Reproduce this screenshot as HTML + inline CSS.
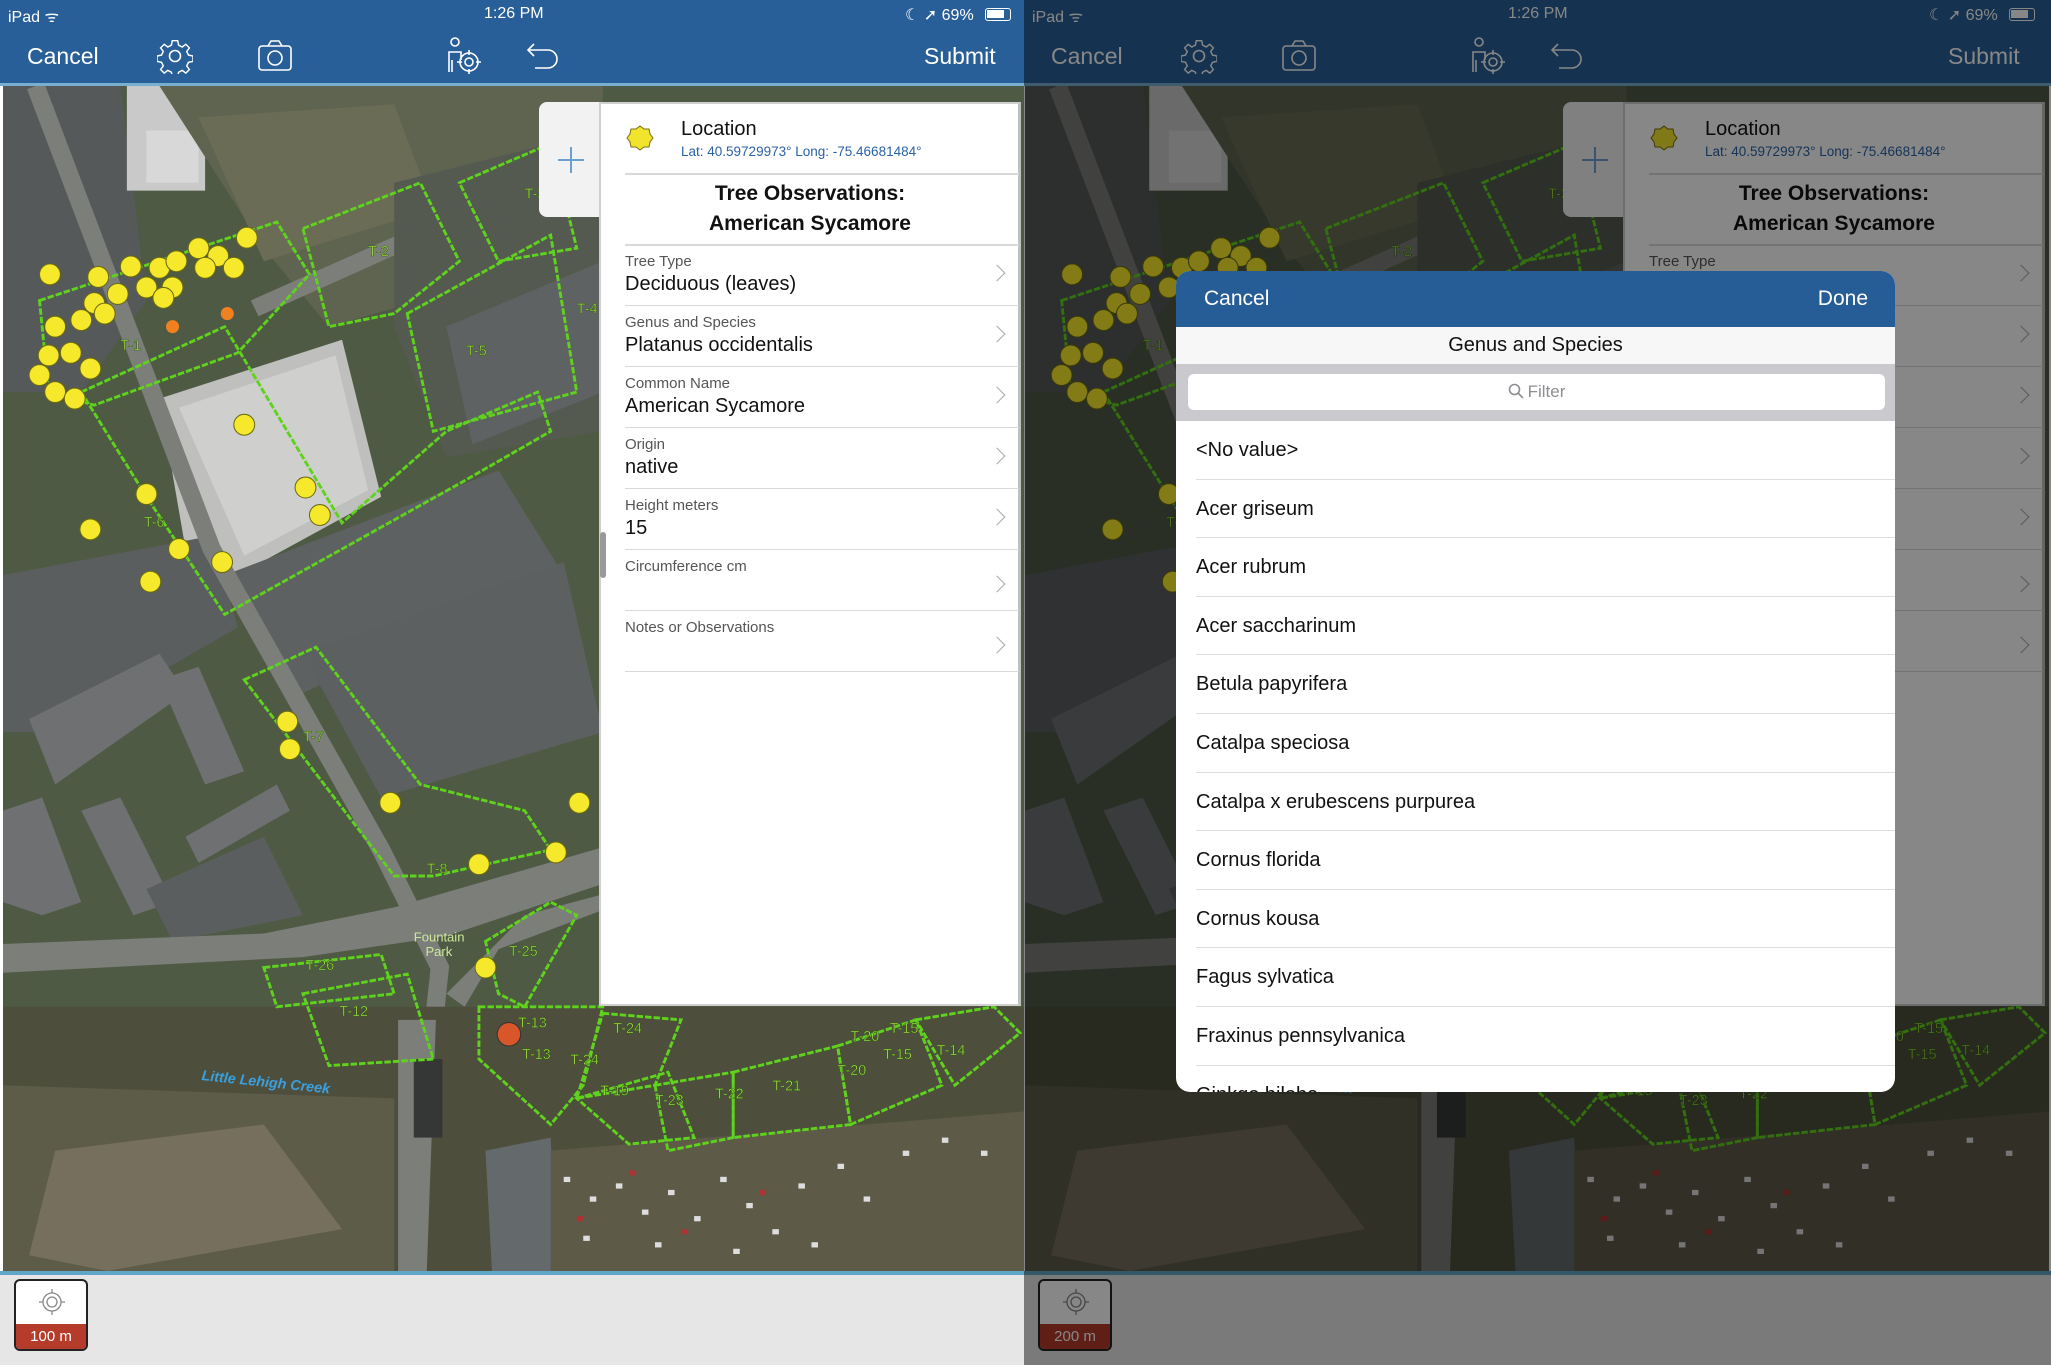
<!DOCTYPE html>
<html><head><meta charset="utf-8">
<style>
*{margin:0;padding:0;box-sizing:border-box}
body{width:2051px;height:1370px;background:#fff;position:relative;overflow:hidden;font-family:"Liberation Sans",Arial,sans-serif}
.panel{position:absolute;top:0;width:1024px;height:1370px;overflow:hidden}
.abs{position:absolute}
.top{position:absolute;left:0;top:0;width:1024px;height:86px;background:#295f98;border-bottom:3px solid #78aed0}
.st{color:#fff;font-size:16px;position:absolute;top:5px}
.nav{color:#fff;font-size:23px;position:absolute;top:43px}
.form{position:absolute;left:599px;top:102px;width:422px;height:904px;background:#fff;border:2px solid #cfcfcf;border-right:3px solid #bfbfbf}
.plus{position:absolute;left:539px;top:102px;width:62px;height:115px;background:#f2f2f2;border-radius:8px 0 0 8px}
.row{position:absolute;left:24px;width:394px;height:61px;border-bottom:1.5px solid #d9d9d9}
.lab{position:absolute;left:0;top:8px;font-size:15px;color:#555}
.val{position:absolute;left:0;top:28px;font-size:20px;color:#111}
.chev{position:absolute;right:16px;top:22px;width:12px;height:12px;border-right:1.8px solid #aaa;border-top:1.8px solid #aaa;transform:rotate(45deg)}
.bot{position:absolute;left:0;top:1271px;width:1024px;height:94px;background:#e6e6e6;border-top:4px solid #5fa6c8}
.btn{position:absolute;left:14px;top:1279px;width:74px;height:72px;border:2px solid #222;border-radius:6px;background:#fff;overflow:hidden}
.btn .r{position:absolute;left:0;bottom:0;width:100%;height:25px;background:#b53b2a;color:#fff;font-size:15px;text-align:center;line-height:25px}
.dim{position:absolute;left:0;top:0;width:1027px;height:1365px;background:rgba(0,0,0,0.47)}
.modal{position:absolute;left:1176px;top:271px;width:719px;height:821px;background:#fff;border-radius:14px;overflow:hidden}
.mh{position:absolute;left:0;top:0;width:100%;height:56px;background:#275d97;color:#fff;font-size:21px}
.it{position:absolute;left:20px;right:0;height:58.6px;border-bottom:1.5px solid #ddd;font-size:20px;color:#111;line-height:58px}
</style></head><body>
<svg width="0" height="0" style="position:absolute">
<defs>
<g id="map">
<rect x="0" y="66" width="783" height="906" fill="#4f5a44"/>
<polygon points="0,66 90,66 110,230 60,300 0,300" fill="#55595a"/>
<rect x="95" y="66" width="60" height="80" fill="#c9c9c9"/>
<rect x="110" y="100" width="40" height="40" fill="#d8d8d8"/>
<polygon points="120,66 460,66 460,190 250,250 200,190" fill="#5f6450"/>
<polygon points="150,90 300,80 330,160 200,200" fill="#6b6c56"/>
<polygon points="190,230 460,110 460,124 196,242" fill="#7c7e7a"/>
<polygon points="300,140 460,100 460,330 340,350 300,250" fill="#545a50"/>
<polygon points="340,250 460,200 460,300 360,340" fill="#5f6262"/>
<polygon points="120,305 260,260 290,380 180,440 140,420" fill="#bfc0be"/>
<polygon points="135,312 255,272 280,375 185,425" fill="#cfd0ce"/>
<polygon points="170,440 380,360 430,440 230,530" fill="#5e6161"/>
<polygon points="230,500 430,430 460,560 290,610" fill="#5d6060"/>
<polygon points="0,440 160,410 180,480 40,560 0,560" fill="#5b5e5f"/>
<polygon points="20,550 120,500 140,530 40,600" fill="#6e7072"/>
<polygon points="60,620 90,610 130,690 100,700" fill="#6e7072"/>
<polygon points="120,520 150,510 185,590 155,600" fill="#6e7072"/>
<polygon points="0,620 30,610 60,690 30,700 0,690" fill="#6e7072"/>
<polygon points="140,640 210,600 220,620 150,660" fill="#6e7072"/>
<polygon points="110,680 200,640 230,700 130,720" fill="#5b5e5f"/>
<polyline points="25,66 160,420 290,650 335,740 322,860 310,972" fill="none" stroke="#7c7e7a" stroke-width="14"/>
<polygon points="0,722 200,714 300,694 460,648 460,676 340,716 230,732 0,744" fill="#7c7e7a"/>
<polygon points="340,760 400,700 460,684 460,696 380,726 354,770" fill="#7c7e7a"/>
<polygon points="0,770 783,770 783,972 0,972" fill="#4d4f3c"/>
<polygon points="0,830 300,840 300,972 0,972" fill="#5c5c48"/>
<polygon points="40,880 200,860 260,940 80,972 20,960" fill="#766f5e"/>
<polygon points="303,780 332,780 325,972 303,972" fill="#7c7e7a"/>
<rect x="315" y="810" width="22" height="60" fill="#353737"/>
<polygon points="370,880 420,870 425,972 375,972" fill="#646a6b"/>
<polygon points="420,880 783,850 783,972 420,972" fill="#5e5a48"/>
<g fill="#ddd">
<rect x="430" y="900" width="5" height="4"/><rect x="450" y="915" width="5" height="4"/><rect x="470" y="905" width="5" height="4"/><rect x="490" y="925" width="5" height="4"/><rect x="510" y="910" width="5" height="4"/><rect x="530" y="930" width="5" height="4"/><rect x="550" y="900" width="5" height="4"/><rect x="570" y="920" width="5" height="4"/><rect x="590" y="940" width="5" height="4"/><rect x="610" y="905" width="5" height="4"/><rect x="640" y="890" width="5" height="4"/><rect x="660" y="915" width="5" height="4"/><rect x="690" y="880" width="5" height="4"/><rect x="720" y="870" width="5" height="4"/><rect x="750" y="880" width="5" height="4"/><rect x="445" y="945" width="5" height="4"/><rect x="500" y="950" width="5" height="4"/><rect x="560" y="955" width="5" height="4"/><rect x="620" y="950" width="5" height="4"/>
</g>
<g fill="#a33">
<rect x="440" y="930" width="5" height="4"/><rect x="520" y="940" width="5" height="4"/><rect x="580" y="910" width="5" height="4"/><rect x="480" y="895" width="5" height="4"/>
</g>
<g fill="none" stroke="#5fd21e" stroke-width="2.2" stroke-dasharray="5 1.5">
<polygon points="28,230 210,170 235,210 180,270 70,310 35,300"/>
<polygon points="230,175 320,140 350,200 300,240 250,250"/>
<polygon points="310,240 420,180 440,300 330,330"/>
<polygon points="350,140 420,110 440,190 380,200"/>
<polygon points="60,300 170,250 260,400 340,330 410,300 420,330 350,370 170,470 110,380"/>
<polygon points="185,520 240,495 320,600 400,620 420,650 330,670 300,670"/>
<polygon points="200,740 290,730 300,760 210,770"/>
<polygon points="230,760 310,745 330,810 250,815"/>
<polygon points="370,720 420,690 440,700 400,770 380,760"/>
<polygon points="365,770 460,770 445,830 420,860 365,810"/>
<polygon points="460,775 520,780 500,830 440,840"/>
<polygon points="440,840 510,820 530,870 480,875"/>
<polygon points="500,830 560,820 560,870 510,880"/>
<polygon points="560,820 640,800 650,860 560,870"/>
<polygon points="640,800 700,780 720,830 650,860"/>
<polygon points="700,780 760,770 780,790 730,830"/>
</g>
<g font-family="Liberation Sans,sans-serif" font-size="11" fill="#b7f04a" stroke="#2a5a10" stroke-width="0.4">
<text x="90" y="268">T-1</text><text x="280" y="196">T-2</text><text x="400" y="152">T-3</text><text x="440" y="240">T-4</text><text x="355" y="272">T-5</text><text x="108" y="403">T-6</text><text x="230" y="567">T-7</text><text x="325" y="668">T-8</text><text x="232" y="742">T-26</text><text x="258" y="777">T-12</text><text x="388" y="731">T-25</text><text x="395" y="786">T-13</text><text x="398" y="810">T-13</text><text x="468" y="790">T-24</text><text x="435" y="814">T-24</text><text x="458" y="838">T-19</text><text x="500" y="845">T-23</text><text x="546" y="840">T-22</text><text x="590" y="834">T-21</text><text x="640" y="822">T-20</text><text x="650" y="796">T-20</text><text x="680" y="790">T-15</text><text x="675" y="810">T-15</text><text x="716" y="807">T-14</text>
</g>
<text x="315" y="720" font-family="Liberation Sans,sans-serif" font-size="10" fill="#cde89a">Fountain</text>
<text x="324" y="731" font-family="Liberation Sans,sans-serif" font-size="10" fill="#cde89a">Park</text>
<text x="152" y="826" font-family="Liberation Sans,sans-serif" font-size="11" font-style="italic" font-weight="bold" fill="#3aa0e0" transform="rotate(6 152 826)">Little Lehigh Creek</text>
<g fill="#f6e82a" stroke="#6a6a10" stroke-width="0.8">
<circle cx="36" cy="210" r="8"/><circle cx="73" cy="212" r="8"/><circle cx="98" cy="204" r="8"/><circle cx="120" cy="205" r="8"/><circle cx="133" cy="200" r="8"/><circle cx="150" cy="190" r="8"/><circle cx="165" cy="196" r="8"/><circle cx="187" cy="182" r="8"/><circle cx="177" cy="205" r="8"/><circle cx="155" cy="205" r="8"/><circle cx="130" cy="220" r="8"/><circle cx="110" cy="220" r="8"/><circle cx="88" cy="225" r="8"/><circle cx="70" cy="232" r="8"/><circle cx="60" cy="245" r="8"/><circle cx="78" cy="240" r="8"/><circle cx="40" cy="250" r="8"/><circle cx="52" cy="270" r="8"/><circle cx="35" cy="272" r="8"/><circle cx="28" cy="287" r="8"/><circle cx="40" cy="300" r="8"/><circle cx="55" cy="305" r="8"/><circle cx="67" cy="282" r="8"/><circle cx="123" cy="228" r="8"/><circle cx="185" cy="325" r="8"/><circle cx="232" cy="373" r="8"/><circle cx="243" cy="394" r="8"/><circle cx="110" cy="378" r="8"/><circle cx="67" cy="405" r="8"/><circle cx="135" cy="420" r="8"/><circle cx="168" cy="430" r="8"/><circle cx="113" cy="445" r="8"/><circle cx="218" cy="552" r="8"/><circle cx="220" cy="573" r="8"/><circle cx="297" cy="614" r="8"/><circle cx="365" cy="661" r="8"/><circle cx="424" cy="652" r="8"/><circle cx="442" cy="614" r="8"/><circle cx="370" cy="740" r="8"/>
</g>
<circle cx="130" cy="250" r="5" fill="#f08020"/><circle cx="172" cy="240" r="5" fill="#f08020"/>
<circle cx="388" cy="791" r="9" fill="#d9552a" stroke="#333" stroke-width="0.8"/>
</g>
</defs>
</svg>

<div class="panel" style="left:0">
<svg class="abs" style="left:3px;top:86px" width="1021" height="1185" viewBox="0 66 783 906" preserveAspectRatio="none"><use href="#map"/></svg>
<div class="top">
 <span class="st" style="left:8px">iPad ᯤ</span>
 <span class="st" style="left:484px">1:26 PM</span>
 <span class="st" style="left:905px">☾ ➚ 69%</span>
 <span class="abs" style="left:985px;top:8px;width:26px;height:13px;border:1.5px solid #fff;border-radius:3px"><span class="abs" style="left:1px;top:1px;width:17px;height:8px;background:#fff"></span></span>
 <span class="nav" style="left:27px">Cancel</span>
 <svg class="abs" style="left:157px;top:38px" width="36" height="36" viewBox="0 0 36 36" fill="none" stroke="#fff" stroke-width="1.6"><path d="M15 3h6l1 5 4 2 4-3 4 4-3 4 2 4 5 1v6l-5 1-2 4 3 4-4 4-4-3-4 2-1 5h-6l-1-5-4-2-4 3-4-4 3-4-2-4-5-1v-6l5-1 2-4-3-4 4-4 4 3 4-2z" transform="scale(.9) translate(2 0)"/><circle cx="18" cy="18" r="5.5"/></svg>
 <svg class="abs" style="left:257px;top:38px" width="36" height="34" viewBox="0 0 36 34" fill="none" stroke="#fff" stroke-width="1.6"><rect x="2" y="8" width="32" height="24" rx="3"/><path d="M11 8l3-5h8l3 5"/><circle cx="18" cy="20" r="7"/></svg>
 <svg class="abs" style="left:445px;top:36px" width="38" height="40" viewBox="0 0 38 40" fill="none" stroke="#fff" stroke-width="1.6"><circle cx="10" cy="6" r="4"/><path d="M4 36V16h12v8M7 36V24"/><circle cx="24" cy="26" r="9"/><circle cx="24" cy="26" r="4"/><path d="M24 14v5M24 33v5M12 26h5M31 26h5"/></svg>
 <svg class="abs" style="left:525px;top:42px" width="36" height="28" viewBox="0 0 36 28" fill="none" stroke="#fff" stroke-width="1.6"><path d="M9 2L3 8l6 6M3 8h20a9 9 0 0 1 0 18H10"/></svg>
 <span class="nav" style="left:924px">Submit</span>
</div>
<div class="plus"><div class="abs" style="left:19px;top:57px;width:26px;height:1.5px;background:#6b9fd0"></div><div class="abs" style="left:31px;top:45px;width:1.5px;height:26px;background:#6b9fd0"></div></div>
<div class="form">
 <svg class="abs" style="left:25px;top:20px" width="28" height="28" viewBox="0 0 28 28"><path d="M14 2l4 3 5 0 1 5 3 4-3 4-1 5-5 0-4 3-4-3-5 0-1-5-3-4 3-4 1-5 5 0z" fill="#f2e42c" stroke="#7a7010"/></svg>
 <div class="abs" style="left:80px;top:14px;font-size:20px;color:#111">Location</div>
 <div class="abs" style="left:80px;top:40px;font-size:13.5px;color:#2b62a6">Lat: 40.59729973° Long: -75.46681484°</div>
 <div class="abs" style="left:24px;top:69px;width:394px;height:1.5px;background:#d9d9d9"></div>
 <div class="abs" style="left:0;top:75px;width:418px;text-align:center;font-size:21px;font-weight:bold;color:#111;line-height:30px">Tree Observations:<br>American Sycamore</div>
 <div class="abs" style="left:24px;top:140px;width:394px;height:1.5px;background:#d9d9d9"></div>
 <div class="row" style="top:141px"><span class="lab">Tree Type</span><span class="val">Deciduous (leaves)</span><span class="chev"></span></div>
 <div class="row" style="top:202px"><span class="lab">Genus and Species</span><span class="val">Platanus occidentalis</span><span class="chev"></span></div>
 <div class="row" style="top:263px"><span class="lab">Common Name</span><span class="val">American Sycamore</span><span class="chev"></span></div>
 <div class="row" style="top:324px"><span class="lab">Origin</span><span class="val">native</span><span class="chev"></span></div>
 <div class="row" style="top:385px"><span class="lab">Height meters</span><span class="val">15</span><span class="chev"></span></div>
 <div class="row" style="top:446px"><span class="lab">Circumference cm</span><span class="chev" style="top:28px"></span></div>
 <div class="row" style="top:507px"><span class="lab">Notes or Observations</span><span class="chev" style="top:28px"></span></div>
</div>
<div class="abs" style="left:600px;top:532px;width:6px;height:46px;background:#999;border-radius:3px"></div>
<div class="bot"></div>
<div class="btn"><svg class="abs" style="left:21px;top:6px" width="30" height="30" viewBox="0 0 30 30" fill="none" stroke="#888" stroke-width="1.3"><circle cx="15" cy="15" r="9"/><circle cx="15" cy="15" r="5"/><path d="M15 2v4M15 24v4M2 15h4M24 15h4"/></svg><div class="r">100 m</div></div>
</div>

<div class="panel" style="left:1024px;width:1027px">
<svg class="abs" style="left:1px;top:86px" width="1024" height="1185" viewBox="0 66 783 906" preserveAspectRatio="none"><use href="#map"/></svg>
<div class="top" style="width:1027px">
 <span class="st" style="left:8px">iPad ᯤ</span>
 <span class="st" style="left:484px">1:26 PM</span>
 <span class="st" style="left:905px">☾ ➚ 69%</span>
 <span class="abs" style="left:985px;top:8px;width:26px;height:13px;border:1.5px solid #fff;border-radius:3px"><span class="abs" style="left:1px;top:1px;width:17px;height:8px;background:#fff"></span></span>
 <span class="nav" style="left:27px">Cancel</span>
 <svg class="abs" style="left:157px;top:38px" width="36" height="36" viewBox="0 0 36 36" fill="none" stroke="#fff" stroke-width="1.6"><path d="M15 3h6l1 5 4 2 4-3 4 4-3 4 2 4 5 1v6l-5 1-2 4 3 4-4 4-4-3-4 2-1 5h-6l-1-5-4-2-4 3-4-4 3-4-2-4-5-1v-6l5-1 2-4-3-4 4-4 4 3 4-2z" transform="scale(.9) translate(2 0)"/><circle cx="18" cy="18" r="5.5"/></svg>
 <svg class="abs" style="left:257px;top:38px" width="36" height="34" viewBox="0 0 36 34" fill="none" stroke="#fff" stroke-width="1.6"><rect x="2" y="8" width="32" height="24" rx="3"/><path d="M11 8l3-5h8l3 5"/><circle cx="18" cy="20" r="7"/></svg>
 <svg class="abs" style="left:445px;top:36px" width="38" height="40" viewBox="0 0 38 40" fill="none" stroke="#fff" stroke-width="1.6"><circle cx="10" cy="6" r="4"/><path d="M4 36V16h12v8M7 36V24"/><circle cx="24" cy="26" r="9"/><circle cx="24" cy="26" r="4"/><path d="M24 14v5M24 33v5M12 26h5M31 26h5"/></svg>
 <svg class="abs" style="left:525px;top:42px" width="36" height="28" viewBox="0 0 36 28" fill="none" stroke="#fff" stroke-width="1.6"><path d="M9 2L3 8l6 6M3 8h20a9 9 0 0 1 0 18H10"/></svg>
 <span class="nav" style="left:924px">Submit</span>
</div>
<div class="plus"><div class="abs" style="left:19px;top:57px;width:26px;height:1.5px;background:#6b9fd0"></div><div class="abs" style="left:31px;top:45px;width:1.5px;height:26px;background:#6b9fd0"></div></div>
<div class="form">
 <svg class="abs" style="left:25px;top:20px" width="28" height="28" viewBox="0 0 28 28"><path d="M14 2l4 3 5 0 1 5 3 4-3 4-1 5-5 0-4 3-4-3-5 0-1-5-3-4 3-4 1-5 5 0z" fill="#f2e42c" stroke="#7a7010"/></svg>
 <div class="abs" style="left:80px;top:14px;font-size:20px;color:#111">Location</div>
 <div class="abs" style="left:80px;top:40px;font-size:13.5px;color:#2b62a6">Lat: 40.59729973° Long: -75.46681484°</div>
 <div class="abs" style="left:24px;top:69px;width:394px;height:1.5px;background:#d9d9d9"></div>
 <div class="abs" style="left:0;top:75px;width:418px;text-align:center;font-size:21px;font-weight:bold;color:#111;line-height:30px">Tree Observations:<br>American Sycamore</div>
 <div class="abs" style="left:24px;top:140px;width:394px;height:1.5px;background:#d9d9d9"></div>
 <div class="row" style="top:141px"><span class="lab">Tree Type</span><span class="chev"></span></div>
 <div class="row" style="top:202px"><span class="chev"></span></div>
 <div class="row" style="top:263px"><span class="chev"></span></div>
 <div class="row" style="top:324px"><span class="chev"></span></div>
 <div class="row" style="top:385px"><span class="chev"></span></div>
 <div class="row" style="top:446px"><span class="chev" style="top:28px"></span></div>
 <div class="row" style="top:507px"><span class="chev" style="top:28px"></span></div>
</div>
<div class="bot" style="width:1027px"></div>
<div class="btn"><svg class="abs" style="left:21px;top:6px" width="30" height="30" viewBox="0 0 30 30" fill="none" stroke="#888" stroke-width="1.3"><circle cx="15" cy="15" r="9"/><circle cx="15" cy="15" r="5"/><path d="M15 2v4M15 24v4M2 15h4M24 15h4"/></svg><div class="r">200 m</div></div>
<div class="dim"></div>
</div>

<div class="modal">
 <div class="mh"><span class="abs" style="left:28px;top:16px">Cancel</span><span class="abs" style="right:27px;top:16px">Done</span></div>
 <div class="abs" style="left:0;top:56px;width:100%;height:37px;background:#f7f7f7;text-align:center;font-size:20px;line-height:37px;color:#111">Genus and Species</div>
 <div class="abs" style="left:0;top:93px;width:100%;height:57px;background:#c9c9ce">
  <div class="abs" style="left:12px;top:10px;right:10px;height:36px;background:#fff;border-radius:6px;text-align:center;line-height:36px;font-size:17px;color:#8e8e93">
   <svg style="vertical-align:-2px;margin-right:4px" width="16" height="16" viewBox="0 0 16 16" fill="none" stroke="#8e8e93" stroke-width="1.6"><circle cx="6.5" cy="6.5" r="5"/><path d="M10 10l5 5"/></svg>Filter</div>
 </div>
 <div class="it" style="top:150px">&lt;No value&gt;</div>
 <div class="it" style="top:208.6px">Acer griseum</div>
 <div class="it" style="top:267.2px">Acer rubrum</div>
 <div class="it" style="top:325.8px">Acer saccharinum</div>
 <div class="it" style="top:384.4px">Betula papyrifera</div>
 <div class="it" style="top:443px">Catalpa speciosa</div>
 <div class="it" style="top:501.6px">Catalpa x erubescens purpurea</div>
 <div class="it" style="top:560.2px">Cornus florida</div>
 <div class="it" style="top:618.8px">Cornus kousa</div>
 <div class="it" style="top:677.4px">Fagus sylvatica</div>
 <div class="it" style="top:736px">Fraxinus pennsylvanica</div>
 <div class="it" style="top:794.6px">Ginkgo biloba</div>
</div>
</body></html>
